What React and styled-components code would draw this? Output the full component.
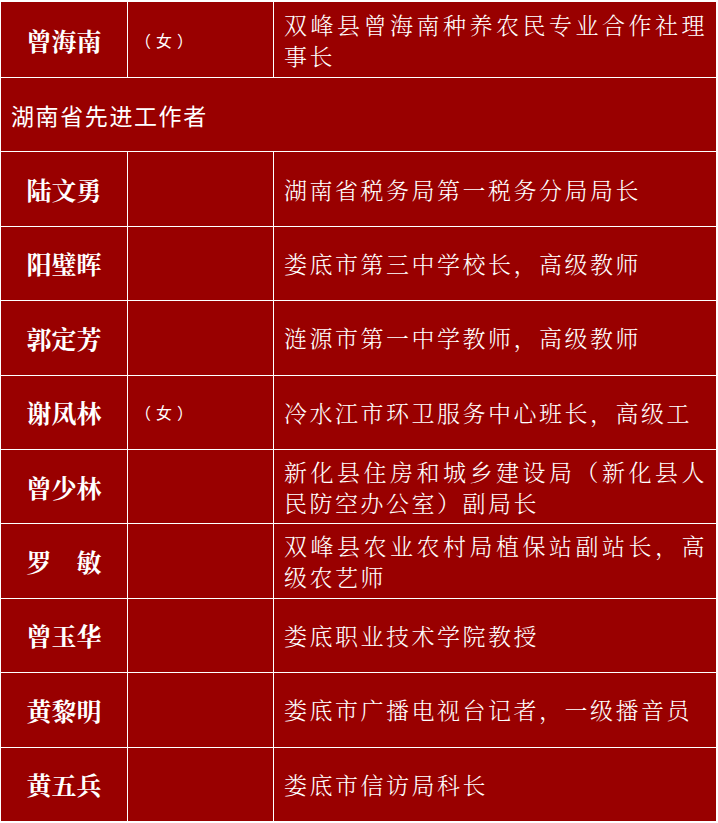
import React from 'react';
import styled, { createGlobalStyle } from 'styled-components';

const GlobalStyle = createGlobalStyle`
  html, body {
    margin: 0;
    padding: 0;
    background: #ffffff;
  }
  body {
    padding-top: 1px;
    text-spacing-trim: space-all;
  }
`;

const Table = styled.table`
  width: 717px;
  border-collapse: collapse;
  background: #990000;
  color: #ffffff;
  table-layout: fixed;
`;

const Row = styled.tr`
  height: ${props => props.first ? '76px' : '74.4px'};
`;

const Cell = styled.td`
  border: 1px solid #ffffff;
  padding: 0;
  vertical-align: middle;
  text-spacing-trim: space-all;
`;

const NameCell = styled(Cell)`
  text-align: center;
  font-family: "Noto Serif CJK SC", "Noto Sans CJK SC", serif;
  font-size: 25px;
  font-weight: 700;
  white-space: pre;
`;

const NoteCell = styled(Cell)`
  padding-left: 7px;
  font-family: "Noto Sans CJK SC", sans-serif;
  font-size: 16px;
  letter-spacing: 5px;
`;

const DutyCell = styled(Cell)`
  padding: 0 9px 0 10px;
  font-family: "Noto Serif CJK SC", "Noto Sans CJK SC", serif;
  font-size: 23px;
  font-weight: 300;
  letter-spacing: 2.5px;
  line-height: 31px;
  text-align: justify;
`;

const SectionCell = styled(Cell)`
  padding-left: 10px;
  font-family: "Noto Sans CJK SC", sans-serif;
  font-size: 23px;
  letter-spacing: 1.6px;
`;

const before = [
  { name: '曾海南', note: '（女）', duty: '双峰县曾海南种养农民专业合作社理事长' },
];

const people = [
  { name: '陆文勇', duty: '湖南省税务局第一税务分局局长' },
  { name: '阳璧晖', duty: '娄底市第三中学校长，高级教师' },
  { name: '郭定芳', duty: '涟源市第一中学教师，高级教师' },
  { name: '谢凤林', note: '（女）', duty: '冷水江市环卫服务中心班长，高级工' },
  { name: '曾少林', duty: '新化县住房和城乡建设局（新化县人民防空办公室）副局长' },
  { name: '罗　敏', duty: '双峰县农业农村局植保站副站长，高级农艺师' },
  { name: '曾玉华', duty: '娄底职业技术学院教授' },
  { name: '黄黎明', duty: '娄底市广播电视台记者，一级播音员' },
  { name: '黄五兵', duty: '娄底市信访局科长' },
];

const PersonRow = ({ person, first }) => (
  <Row first={first ? 1 : 0}>
    <NameCell>{person.name}</NameCell>
    <NoteCell>{person.note || ''}</NoteCell>
    <DutyCell>{person.duty}</DutyCell>
  </Row>
);

export default function App() {
  return (
    <>
      <GlobalStyle />
      <Table>
        <colgroup>
          <col style={{ width: '127px' }} />
          <col style={{ width: '146px' }} />
          <col />
        </colgroup>
        <tbody>
          {before.map((p, i) => <PersonRow key={'b' + i} person={p} first />)}
          <Row>
            <SectionCell colSpan={3}>湖南省先进工作者</SectionCell>
          </Row>
          {people.map((p, i) => <PersonRow key={i} person={p} />)}
        </tbody>
      </Table>
    </>
  );
}
